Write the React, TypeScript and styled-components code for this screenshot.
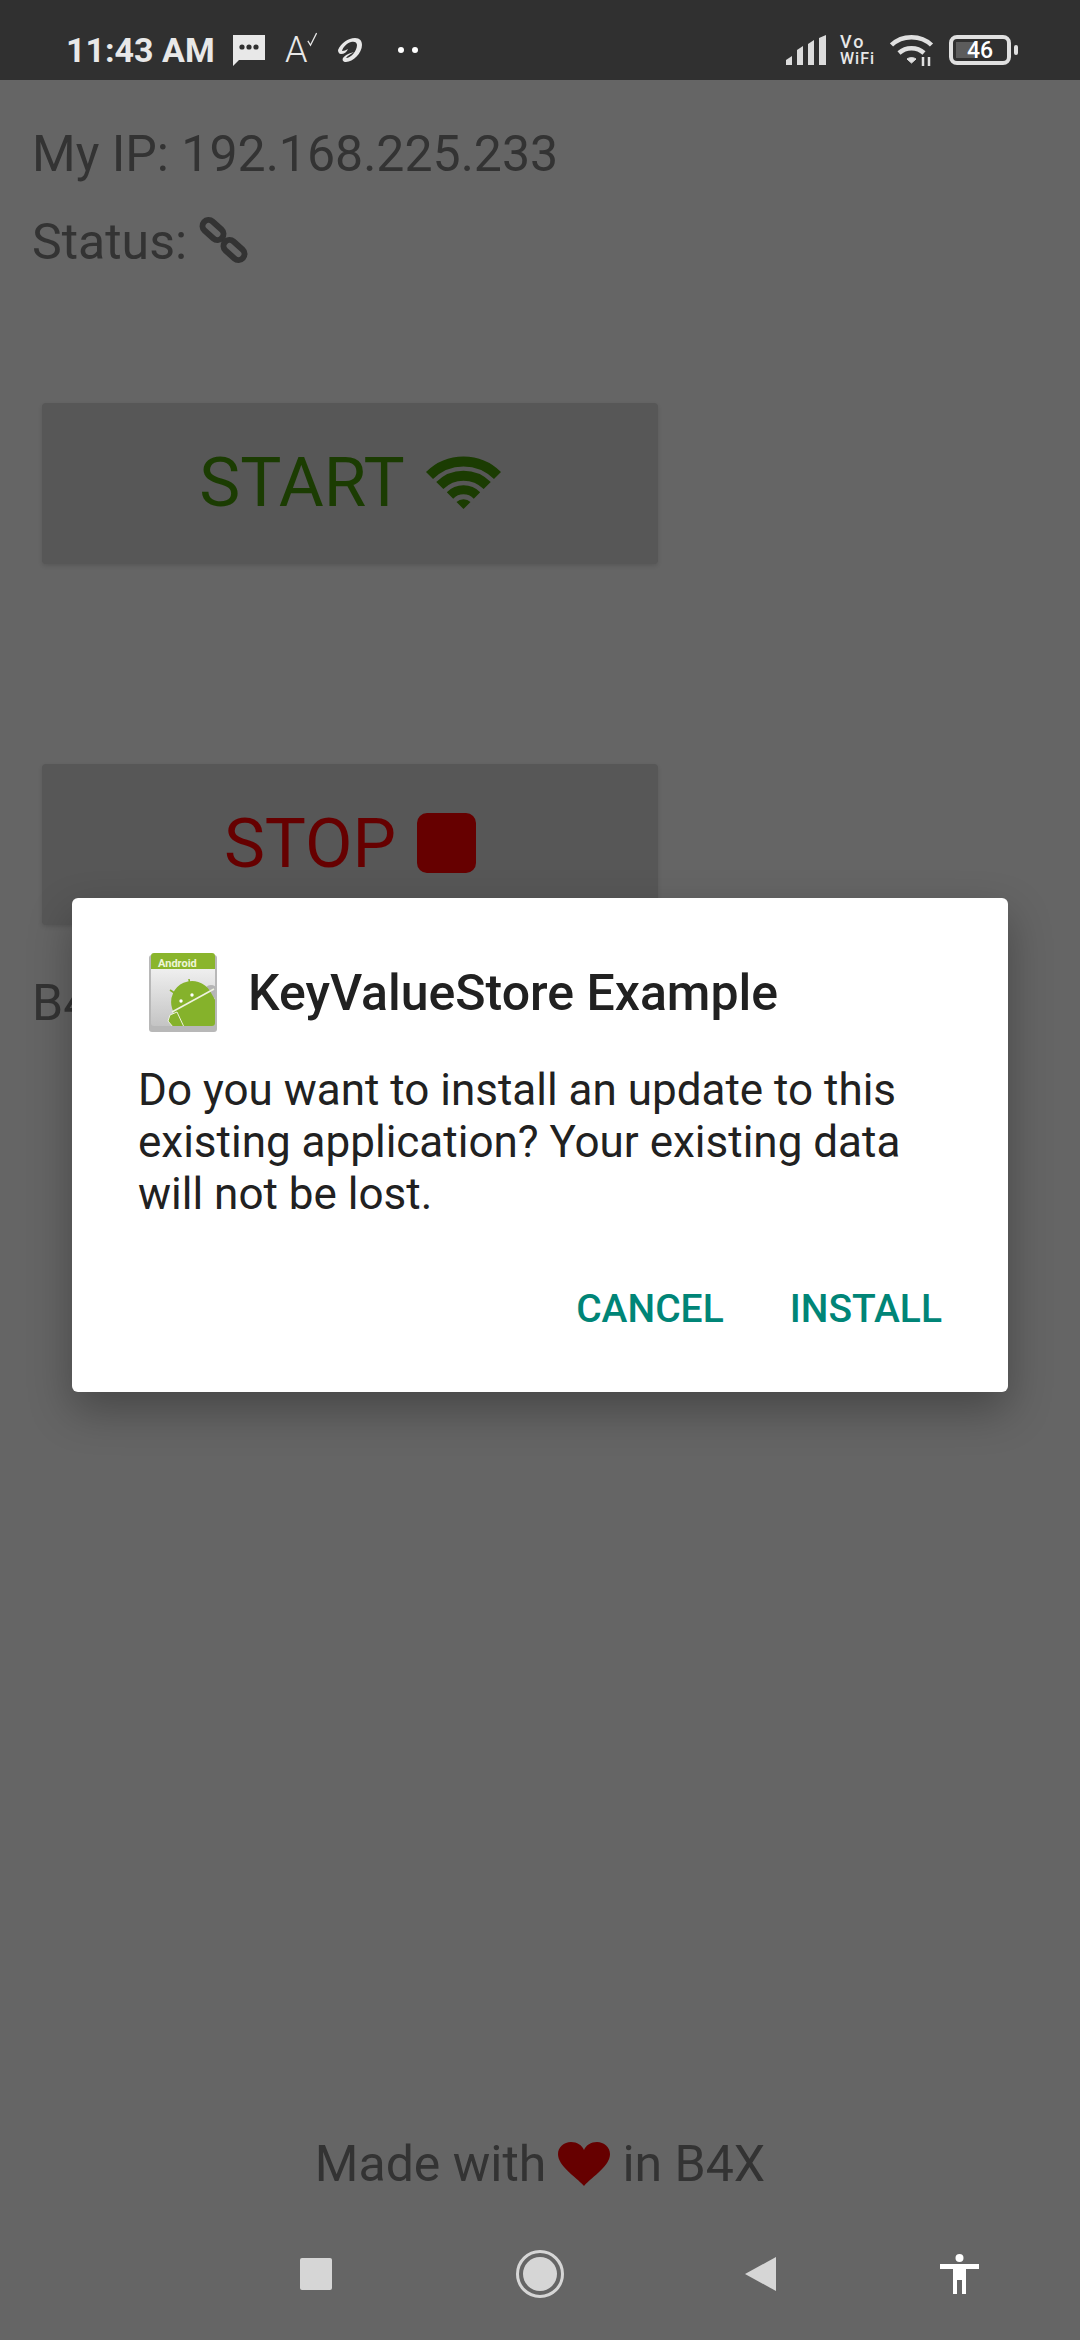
import styled, { createGlobalStyle } from "styled-components";

const GlobalStyle = createGlobalStyle`
  html, body {
    margin: 0;
    padding: 0;
    background: #656565;
  }
  * {
    box-sizing: border-box;
  }
`;

const Screen = styled.div`
  position: relative;
  width: 1080px;
  height: 2340px;
  display: flex;
  flex-direction: column;
  overflow: hidden;
  background: #656565;
  font-family: Roboto, "Liberation Sans", sans-serif;
  color: #333;
`;

const StatusBar = styled.header`
  height: 80px;
  flex: none;
  display: flex;
  align-items: center;
  justify-content: space-between;
  padding: 20px 63px 0 66px;
  background: #303030;
  color: #e8e8e8;
`;

const StatusGroup = styled.div`
  display: flex;
  align-items: center;
`;

const Clock = styled.span`
  font-size: 34px;
  font-weight: 700;
  width: 167px;
  white-space: nowrap;
`;

const SpellMark = styled.span`
  display: flex;
  align-items: flex-start;
  width: 32px;
  margin: 0 21px 0 20px;
  font-size: 36px;
  font-weight: 300;
  line-height: 36px;
`;

const SpellTick = styled.svg`
  margin-left: -1px;
`;

const Dots = styled.svg`
  margin-left: 36px;
`;

const VoWifi = styled.span`
  display: flex;
  flex-direction: column;
  align-items: flex-start;
  width: 37px;
  margin: 0 13px 0 14px;
  font-weight: 500;
`;

const VoLabel = styled.span`
  font-size: 18px;
  line-height: 17px;
  letter-spacing: 2px;
`;

const WifiLabel = styled.span`
  font-size: 16px;
  line-height: 17px;
  letter-spacing: 1px;
`;

const Battery = styled.div`
  position: relative;
  width: 62px;
  height: 30px;
  margin: 0 6px 0 15px;
  border: 4px solid #e0e0e0;
  border-radius: 8px;
  display: flex;
  align-items: center;
  justify-content: center;
  font-size: 23px;
  font-weight: 500;
  color: #fff;
  &::before {
    content: "";
    position: absolute;
    left: 3px;
    top: 3px;
    bottom: 3px;
    width: 18px;
    background: #5c5c5c;
  }
  &::after {
    content: "";
    position: absolute;
    right: -11px;
    top: 6px;
    width: 4px;
    height: 10px;
    border-radius: 2px;
    background: #e0e0e0;
  }
`;

const BatteryLevel = styled.span`
  position: relative;
  z-index: 1;
`;

const Main = styled.main`
  flex: 1;
  display: flex;
  flex-direction: column;
  padding: 44px 32px 0;
`;

const InfoLine = styled.div<{ $after: number }>`
  display: flex;
  align-items: center;
  height: 60px;
  margin-bottom: ${(p) => p.$after}px;
  font-size: 50px;
  white-space: nowrap;
`;

const LinkSvg = styled.svg`
  margin: -4px 0 0 14px;
  overflow: visible;
`;

const ActionButton = styled.button<{ $color: string; $after: number }>`
  width: 616px;
  height: 161px;
  margin: 0 0 ${(p) => p.$after}px 10px;
  padding: 0 0 3px;
  display: flex;
  align-items: center;
  justify-content: center;
  gap: 21px;
  border: 0;
  border-radius: 4px;
  background: #575757;
  box-shadow: 0 2px 4px rgba(0, 0, 0, 0.12);
  color: ${(p) => p.$color};
  font-family: inherit;
  font-size: 69px;
`;

const StopMark = styled.span`
  width: 59px;
  height: 60px;
  border-radius: 10px;
  background: #660000;
`;

const HiddenLine = styled.div`
  font-size: 50px;
  line-height: 60px;
`;

const Credit = styled.footer`
  flex: none;
  display: flex;
  align-items: center;
  justify-content: center;
  gap: 12px;
  height: 60px;
  font-size: 50px;
  margin-bottom: 4px;
`;

const NavBar = styled.nav`
  flex: none;
  height: 142px;
  display: flex;
  align-items: center;
  padding: 10px 0 0 300px;
`;

const NavSlot = styled.span<{ $left: number }>`
  display: flex;
  margin-left: ${(p) => p.$left}px;
`;

const Dialog = styled.section`
  position: absolute;
  left: 72px;
  top: 898px;
  width: 936px;
  height: 494px;
  padding: 54px 66px 0;
  border-radius: 6px;
  background: #fff;
  box-shadow: 0 18px 44px rgba(0, 0, 0, 0.3);
  color: #212121;
`;

const DialogHead = styled.div`
  display: flex;
  align-items: center;
  height: 82px;
  gap: 30px;
  margin-left: 10px;
`;

const DialogTitle = styled.h2`
  margin: 0;
  font-size: 50px;
  font-weight: 500;
  white-space: nowrap;
`;

const DialogBody = styled.p`
  margin: 30px 0 0;
  font-size: 44px;
  line-height: 52px;
`;

const DialogActions = styled.div`
  display: flex;
  justify-content: flex-end;
  gap: 66px;
  margin-top: 66px;
`;

const DialogAction = styled.button`
  padding: 0;
  border: 0;
  background: none;
  color: #008577;
  font-family: inherit;
  font-size: 39px;
  font-weight: 500;
`;

function ChatIcon() {
  return (
    <svg width="32" height="32" viewBox="0 0 32 32">
      <path d="M0 1h32v25H6l-6 6z" fill="#e8e8e8" />
      <circle cx="9" cy="13" r="2.6" fill="#303030" />
      <circle cx="16" cy="13" r="2.6" fill="#303030" />
      <circle cx="23" cy="13" r="2.6" fill="#303030" />
    </svg>
  );
}

function CarrierIcon() {
  return (
    <svg width="24" height="25" viewBox="0 0 24 25" fill="#e8e8e8">
      <path d="M0 12C3 5 10 0 17 0c5 0 7 3 7 7 0 8-9 17-16 17-3 0-4-2-3-4 2-3 7-5 11-6-3 2-7 4-8 6 5 0 11-7 11-13 0-3-3-4-6-3-4 1-8 5-9 9 2 0 4-1 6-2-1 3-4 5-7 5-2 0-3-2-3-4z" />
    </svg>
  );
}

function SignalIcon() {
  return (
    <svg width="40" height="30" viewBox="0 0 40 30" fill="#dcdcdc">
      <path d="M0 30v-5l6-4v9zM11 30V15l6-4v19zM22 30V9l6-4v25zM33 30V3l7-3v30z" />
    </svg>
  );
}

function StatusWifiIcon() {
  return (
    <svg width="44" height="32" viewBox="0 0 44 32" fill="none" stroke="#e0e0e0">
      <path d="M1.500 11C12 .5 31 .5 41.500 11" strokeWidth="4.5" />
      <path d="M9 19c7-6.500 18-6.500 25 0" strokeWidth="4.5" />
      <path d="M17 25c3-2 6-2 9 0l-4.500 4z" fill="#e0e0e0" strokeWidth="1" />
      <path d="M33 23v9M39 23v9" strokeWidth="2.5" />
    </svg>
  );
}

function LinkIcon() {
  return (
    <LinkSvg width="46" height="46" viewBox="0 0 46 46">
      <g fill="none" stroke="#333" strokeWidth="6">
        <rect x="0" y="7" width="24" height="12" rx="6" transform="rotate(42 12 13)" />
        <rect x="21" y="27" width="24" height="12" rx="6" transform="rotate(42 33 33)" />
      </g>
    </LinkSvg>
  );
}

function WifiGlyph() {
  return (
    <svg width="75" height="54" viewBox="0 0 75 54" fill="none" stroke="#1b3c02">
      <path d="M3.500 20.500a48 48 0 0 1 68 0" strokeWidth="10" />
      <path d="M13.800 30.500a33.500 33.500 0 0 1 47.400 0" strokeWidth="10" />
      <path d="M24 40.500a19 19 0 0 1 27 0" strokeWidth="9" />
      <path d="M37.500 54l-7-7a10 10 0 0 1 14 0z" fill="#1b3c02" stroke="none" />
    </svg>
  );
}

function HeartIcon() {
  return (
    <svg width="52" height="44" viewBox="0 0 52 44">
      <path
        d="M26 44C17 34 0 24 0 12 0 5 6 0 13 0c6 0 11 3 13 8 2-5 7-8 13-8 7 0 13 5 13 12 0 12-17 22-26 32z"
        fill="#660000"
      />
    </svg>
  );
}

function ApkIcon() {
  return (
    <svg width="70" height="82" viewBox="0 0 70 82">
      <defs>
        <linearGradient id="sheet" x1="0" y1="0" x2="0" y2="1">
          <stop offset="0" stopColor="#fbfbfb" />
          <stop offset="1" stopColor="#c4c4c4" />
        </linearGradient>
        <clipPath id="page">
          <rect x="3" y="1" width="64" height="73" rx="3" />
        </clipPath>
      </defs>
      <rect x="1" y="3" width="68" height="77" rx="3" fill="#7d7d7d" opacity="0.55" />
      <rect x="3" y="1" width="64" height="73" rx="3" fill="url(#sheet)" />
      <path d="M3 17V4a3 3 0 0 1 3-3h58a3 3 0 0 1 3 3v13z" fill="#8ab52c" />
      <text x="10" y="15" fontFamily="Roboto, sans-serif" fontSize="11" fontWeight="700" fill="#eef5d8">
        Android
      </text>
      <g clipPath="url(#page)">
        <circle cx="63" cy="40" r="7" fill="#b5b5b5" />
        <path d="M24 56a21 21 0 0 1 38-17l8 14v21H30z" fill="#85b22b" />
        <path d="M24 60l42-23" stroke="#eef2df" strokeWidth="1.6" fill="none" />
        <path d="M28 42l-6-4M42 34l-1-7" stroke="#85b22b" strokeWidth="1.6" />
        <circle cx="33" cy="49" r="1.7" fill="#fff" />
        <circle cx="44" cy="43" r="1.7" fill="#fff" />
        <path d="M22 63l-2 6 5 6h11l-7-15z" fill="#85b22b" stroke="#eef2df" strokeWidth="1" />
      </g>
    </svg>
  );
}

export default function App() {
  return (
    <Screen>
      <GlobalStyle />
      <StatusBar>
        <StatusGroup>
          <Clock>11:43 AM</Clock>
          <ChatIcon />
          <SpellMark>
            A
            <SpellTick width="12" height="16" viewBox="0 0 12 16">
              <path d="M1 9l3 5 7-14" fill="none" stroke="#e8e8e8" strokeWidth="1.5" />
            </SpellTick>
          </SpellMark>
          <CarrierIcon />
          <Dots width="20" height="6" viewBox="0 0 20 6">
            <circle cx="3" cy="3" r="3" fill="#fff" />
            <circle cx="17" cy="3" r="3" fill="#fff" />
          </Dots>
        </StatusGroup>
        <StatusGroup>
          <SignalIcon />
          <VoWifi>
            <VoLabel>Vo</VoLabel>
            <WifiLabel>WiFi</WifiLabel>
          </VoWifi>
          <StatusWifiIcon />
          <Battery>
            <BatteryLevel>46</BatteryLevel>
          </Battery>
        </StatusGroup>
      </StatusBar>

      <Main>
        <InfoLine $after={28}>My IP: 192.168.225.233</InfoLine>
        <InfoLine $after={131}>
          Status:
          <LinkIcon />
        </InfoLine>
        <ActionButton $color="#1b3c02" $after={200}>
          START
          <WifiGlyph />
        </ActionButton>
        <ActionButton $color="#660000" $after={48}>
          STOP
          <StopMark />
        </ActionButton>
        <HiddenLine>B4X</HiddenLine>
      </Main>

      <Credit>
        <span>Made with</span>
        <HeartIcon />
        <span>in B4X</span>
      </Credit>

      <NavBar>
        <NavSlot $left={0}>
          <svg width="32" height="32" viewBox="0 0 32 32">
            <rect width="32" height="32" rx="2" fill="#d6d6d6" />
          </svg>
        </NavSlot>
        <NavSlot $left={184}>
          <svg width="48" height="48" viewBox="0 0 48 48">
            <circle cx="24" cy="24" r="22.500" fill="none" stroke="#d6d6d6" strokeWidth="3" />
            <circle cx="24" cy="24" r="17" fill="#d6d6d6" />
          </svg>
        </NavSlot>
        <NavSlot $left={181}>
          <svg width="31" height="36" viewBox="0 0 31 36">
            <path d="M31 1v34L0 18z" fill="#d6d6d6" />
          </svg>
        </NavSlot>
        <NavSlot $left={164}>
          <svg width="39" height="40" viewBox="0 0 39 40" fill="#fff">
            <circle cx="19.500" cy="4" r="4" />
            <path d="M0 10h39v5H26v25h-4V26h-5v14h-4V15H0z" />
          </svg>
        </NavSlot>
      </NavBar>

      <Dialog>
        <DialogHead>
          <ApkIcon />
          <DialogTitle>KeyValueStore Example</DialogTitle>
        </DialogHead>
        <DialogBody>
          Do you want to install an update to this existing application? Your existing data will not
          be lost.
        </DialogBody>
        <DialogActions>
          <DialogAction>CANCEL</DialogAction>
          <DialogAction>INSTALL</DialogAction>
        </DialogActions>
      </Dialog>
    </Screen>
  );
}
